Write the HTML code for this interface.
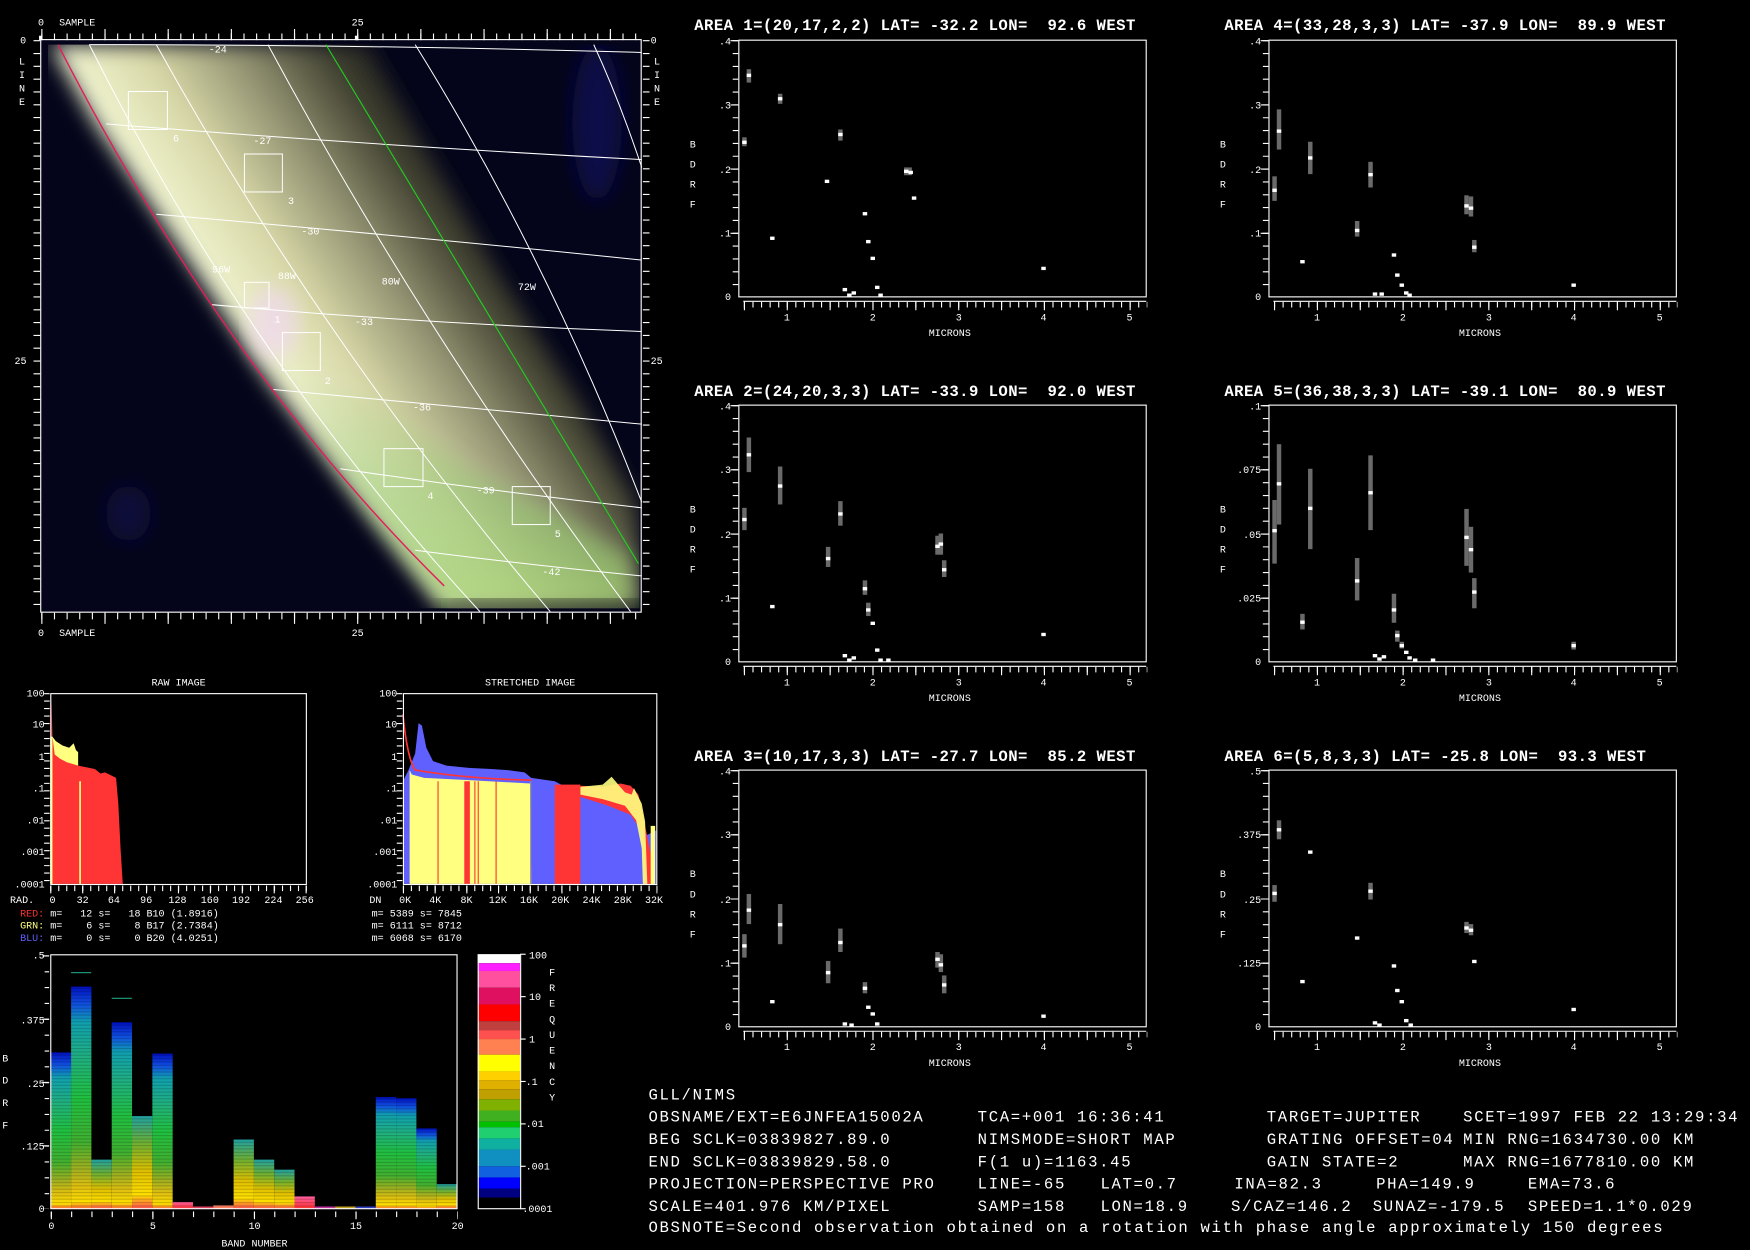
<!DOCTYPE html>
<html><head><meta charset="utf-8"><style>
html,body{margin:0;padding:0;background:#000;width:1750px;height:1250px;overflow:hidden}
svg{display:block}
text{font-family:"Liberation Mono","DejaVu Sans Mono",monospace;fill:#fff;white-space:pre}
.s{font-size:9px}
.t{font-size:14px;font-weight:bold;letter-spacing:0.4px}
.b{font-size:14px;letter-spacing:1.5px}
</style></head><body>
<svg width="1750" height="1250" viewBox="0 0 1568 1120" preserveAspectRatio="none" xmlns="http://www.w3.org/2000/svg" xml:space="preserve">
<defs>
<filter id="bl" x="-20%" y="-20%" width="140%" height="140%"><feGaussianBlur stdDeviation="9"/></filter>
<linearGradient id="band" gradientUnits="userSpaceOnUse" x1="140" y1="260" x2="440" y2="58">
<stop offset="0" stop-color="#90b8b0"/><stop offset="0.12" stop-color="#f0f4d0"/><stop offset="0.3" stop-color="#d8d8a8"/><stop offset="0.5" stop-color="#909070"/><stop offset="0.68" stop-color="#404030"/><stop offset="0.82" stop-color="#141418"/><stop offset="1" stop-color="#04051a"/>
</linearGradient>
<linearGradient id="grn" x1="0" y1="0" x2="0" y2="1">
<stop offset="0" stop-color="#90c070" stop-opacity="0"/><stop offset="0.5" stop-color="#90c870" stop-opacity="0.5"/><stop offset="1" stop-color="#a0d070" stop-opacity="0.75"/>
</linearGradient>
<linearGradient id="bg1" x1="0" y1="0" x2="0" y2="1">
<stop offset="0" stop-color="#0010c0"/><stop offset="0.08" stop-color="#1050e0"/><stop offset="0.16" stop-color="#10a0b0"/><stop offset="0.32" stop-color="#20b080"/><stop offset="0.5" stop-color="#20c040"/><stop offset="0.7" stop-color="#40b030"/><stop offset="0.82" stop-color="#a0b020"/><stop offset="0.9" stop-color="#e0c010"/><stop offset="0.97" stop-color="#ffe000"/><stop offset="1" stop-color="#ff6040"/>
</linearGradient>
<linearGradient id="bg2" x1="0" y1="0" x2="0" y2="1">
<stop offset="0" stop-color="#20a0a0"/><stop offset="0.3" stop-color="#70b030"/><stop offset="0.6" stop-color="#e0c000"/><stop offset="0.85" stop-color="#ffe000"/><stop offset="1" stop-color="#ff5050"/>
</linearGradient>
<linearGradient id="bg3" x1="0" y1="0" x2="0" y2="1">
<stop offset="0" stop-color="#ff60a0"/><stop offset="1" stop-color="#ff3030"/>
</linearGradient>
<pattern id="str" width="4" height="3" patternUnits="userSpaceOnUse"><rect width="4" height="1" fill="#000" opacity="0.18"/></pattern>
<clipPath id="cp"><rect x="43" y="40" width="530" height="505"/></clipPath>
<g id="ax">
<rect x="662" y="36" width="365" height="230" fill="none" stroke="#fff" stroke-width="1"/>
<line x1="659" y1="36" x2="659" y2="266" stroke="#fff" stroke-width="5" stroke-dasharray="1 10.5"/>
<line x1="658" y1="36" x2="658" y2="266" stroke="#fff" stroke-width="7" stroke-dasharray="1 56.5"/>
<line x1="666" y1="270" x2="1027" y2="270" stroke="#fff"/>
<line x1="666.5" y1="273" x2="1028" y2="273" stroke="#fff" stroke-width="5" stroke-dasharray="1 6.68"/>
<line x1="666.5" y1="274" x2="1028" y2="274" stroke="#fff" stroke-width="8" stroke-dasharray="1 37.4"/>
<text class="s" x="705" y="287" text-anchor="middle">1</text>
<text class="s" x="782" y="287" text-anchor="middle">2</text>
<text class="s" x="859" y="287" text-anchor="middle">3</text>
<text class="s" x="935" y="287" text-anchor="middle">4</text>
<text class="s" x="1012" y="287" text-anchor="middle">5</text>
<text class="s" x="851" y="301" text-anchor="middle">MICRONS</text>
<text class="s" x="618" y="132">B</text><text class="s" x="618" y="150">D</text><text class="s" x="618" y="168">R</text><text class="s" x="618" y="186">F</text>
</g>
</defs>

<!-- IMAGE PANEL -->
<rect x="37" y="36" width="538" height="512" fill="#04051a"/>
<g clip-path="url(#cp)">
<ellipse cx="535" cy="110" rx="22" ry="70" fill="#0c0c48" filter="url(#bl)"/>
<ellipse cx="115" cy="460" rx="20" ry="25" fill="#0c0c3a" filter="url(#bl)"/>
<polygon points="45,40 330,40 380,130 450,250 520,360 570,450 575,545 400,548 330,460 240,340 160,220 85,110" fill="url(#band)" filter="url(#bl)"/>
<polygon points="260,330 340,360 420,420 500,460 565,500 565,545 400,545 340,470 290,400" fill="url(#grn)" filter="url(#bl)"/>
<ellipse cx="245" cy="290" rx="22" ry="32" fill="#f0d8f0" opacity="0.75" filter="url(#bl)"/>
<polygon points="395,538 575,538 575,548 395,548" fill="#181e14" filter="url(#bl)"/>
</g>
<g fill="none" stroke="#fff" stroke-width="0.9">
<path d="M80 40 Q330 40 575 47"/>
<path d="M95 111 Q330 130 575 143"/>
<path d="M140 192 Q350 210 575 233"/>
<path d="M190 273 Q380 290 575 297"/>
<path d="M245 349 Q420 365 575 380"/>
<path d="M305 420 Q440 440 575 455"/>
<path d="M372 493 Q480 507 575 516"/>
<path d="M80 40 Q220 320 430 548"/>
<path d="M140 40 Q290 310 493 548"/>
<path d="M240 40 Q380 300 565 548"/>
<path d="M372 40 Q490 230 575 450"/>
<path d="M532 40 Q555 90 575 150"/>
<rect x="115" y="82" width="35" height="34"/>
<rect x="219" y="138" width="34" height="34"/>
<rect x="219" y="253" width="22" height="23"/>
<rect x="253" y="298" width="34" height="34"/>
<rect x="344" y="402" width="35" height="34"/>
<rect x="459" y="436" width="34" height="34"/>
</g>
<path d="M292 40 Q430 270 572 505" fill="none" stroke="#20d020" stroke-width="1"/>
<path d="M52 40 Q200 330 398 525" fill="none" stroke="#e0205a" stroke-width="1.3"/>
<g>
<text class="s" x="187" y="47">-24</text><text class="s" x="227" y="129">-27</text><text class="s" x="270" y="210">-30</text>
<text class="s" x="318" y="291">-33</text><text class="s" x="370" y="368">-36</text><text class="s" x="427" y="442">-39</text><text class="s" x="486" y="515">-42</text>
<text class="s" x="190" y="244">96W</text><text class="s" x="249" y="250">88W</text><text class="s" x="342" y="255">80W</text><text class="s" x="464" y="260">72W</text>
<text class="s" x="155" y="127">6</text><text class="s" x="258" y="183">3</text><text class="s" x="246" y="289">1</text><text class="s" x="291" y="344">2</text><text class="s" x="383" y="447">4</text><text class="s" x="497" y="481">5</text>
</g>
<rect x="36.5" y="35.5" width="538" height="513" fill="none" stroke="#fff"/>
<line x1="37" y1="33" x2="575" y2="33" stroke="#fff" stroke-width="6" stroke-dasharray="1 10.32"/>
<line x1="37" y1="31" x2="575" y2="31" stroke="#fff" stroke-width="10" stroke-dasharray="1 55.6"/>
<line x1="37" y1="552" x2="575" y2="552" stroke="#fff" stroke-width="6" stroke-dasharray="1 10.32"/>
<line x1="37" y1="554" x2="575" y2="554" stroke="#fff" stroke-width="10" stroke-dasharray="1 55.6"/>
<line x1="33" y1="36" x2="33" y2="548" stroke="#fff" stroke-width="6" stroke-dasharray="1 10.48"/>
<line x1="579" y1="36" x2="579" y2="548" stroke="#fff" stroke-width="6" stroke-dasharray="1 10.48"/>
<rect x="35" y="32" width="3" height="4" fill="#fff"/><rect x="318" y="32" width="3" height="4" fill="#fff"/>
<text class="s" x="34" y="23">0</text><text class="s" x="53" y="23">SAMPLE</text><text class="s" x="315" y="23">25</text>
<text class="s" x="34" y="570">0</text><text class="s" x="53" y="570">SAMPLE</text><text class="s" x="315" y="570">25</text>
<text class="s" x="18" y="39">0</text><text class="s" x="13" y="326">25</text><text class="s" x="583" y="39">0</text><text class="s" x="583" y="326">25</text>
<text class="s" x="17" y="58">L</text><text class="s" x="17" y="70">I</text><text class="s" x="17" y="82">N</text><text class="s" x="17" y="94">E</text>
<text class="s" x="586" y="58">L</text><text class="s" x="586" y="70">I</text><text class="s" x="586" y="82">N</text><text class="s" x="586" y="94">E</text>

<!-- RAW HISTOGRAM -->
<text class="s" x="160" y="614" text-anchor="middle">RAW IMAGE</text>
<polygon points="47,792 47,660 50,664 56,668 62,670 66,666 68,672 70,674 70,700 47,700" fill="#ffff80"/>
<polygon points="46,792 46,620 47,660 49,676 54,680 60,683 70,686 80,688 85,689 90,693 94,692 98,694 104,697 106,720 107,740 108,760 110,792" fill="#ff3535"/>
<rect x="45" y="660" width="2" height="132" fill="#ffff80"/>
<rect x="71" y="700" width="1.5" height="92" fill="#ffff80"/>
<rect x="45.5" y="621.5" width="229" height="171" fill="none" stroke="#fff"/>
<line x1="42" y1="621" x2="42" y2="792" stroke="#fff" stroke-width="5" stroke-dasharray="1 5.7"/>
<line x1="45" y1="796" x2="275" y2="796" stroke="#fff" stroke-width="5" stroke-dasharray="1 6.16"/>
<line x1="45" y1="797" x2="275" y2="797" stroke="#fff" stroke-width="7" stroke-dasharray="1 27.6"/>
<g text-anchor="end">
<text class="s" x="40" y="624">100</text><text class="s" x="40" y="652">10</text><text class="s" x="40" y="681">1</text><text class="s" x="40" y="709">.1</text><text class="s" x="40" y="738">.01</text><text class="s" x="40" y="766">.001</text><text class="s" x="40" y="795">.0001</text>
<text class="s" x="356" y="624">100</text><text class="s" x="356" y="652">10</text><text class="s" x="356" y="681">1</text><text class="s" x="356" y="709">.1</text><text class="s" x="356" y="738">.01</text><text class="s" x="356" y="766">.001</text><text class="s" x="356" y="795">.0001</text>
</g>
<text class="s" x="9" y="809">RAD.</text>
<g text-anchor="middle">
<text class="s" x="47" y="809">0</text><text class="s" x="74" y="809">32</text><text class="s" x="102" y="809">64</text><text class="s" x="131" y="809">96</text><text class="s" x="159" y="809">128</text><text class="s" x="188" y="809">160</text><text class="s" x="216" y="809">192</text><text class="s" x="245" y="809">224</text><text class="s" x="273" y="809">256</text>
</g>
<text class="s" x="18" y="821"><tspan style="fill:#ff3030">RED:</tspan> m=   12 s=   18 B10 (1.8916)</text>
<text class="s" x="18" y="832"><tspan style="fill:#ffff80">GRN:</tspan> m=    6 s=    8 B17 (2.7384)</text>
<text class="s" x="18" y="843"><tspan style="fill:#6060ff">BLU:</tspan> m=    0 s=    0 B20 (4.0251)</text>

<!-- STRETCHED HISTOGRAM -->
<text class="s" x="475" y="614" text-anchor="middle">STRETCHED IMAGE</text>
<polygon points="361,792 361,700 366,690 372,675 375,648 378,650 382,670 388,682 400,686 420,688 440,689 455,690 470,692 476,697 497,700 520,712 540,718 560,724 572,738 580,748 588,744 588,792" fill="#6060ff"/>
<polygon points="520,704 540,705 556,702 565,704 572,712 576,730 580,750 584,770 584,792 578,792 575,745 565,730 545,722 520,714" fill="#ff3535"/>
<rect x="497" y="703" width="23" height="89" fill="#ff3535"/>
<polygon points="367,792 367,690 369,694 380,697 420,699 475,702 476,792" fill="#ffff80"/>
<polygon points="520,705 540,703 548,696 554,703 560,710 566,712 568,706 575,720 578,736 580,792 576,792 575,760 570,735 560,722 540,716 520,712" fill="#ffff80" opacity="0.9"/>
<path d="M361 640 Q365 680 372 690 Q420 698 476 699" fill="none" stroke="#ff3535" stroke-width="1.5"/>
<rect x="392" y="700" width="1" height="92" fill="#ff3535"/><rect x="416" y="700" width="5" height="92" fill="#ff3535"/>
<rect x="425" y="700" width="1" height="92" fill="#ff3535"/><rect x="428" y="700" width="1" height="92" fill="#ff3535"/><rect x="444" y="700" width="1" height="92" fill="#ff3535"/>
<rect x="475" y="700" width="1" height="92" fill="#909090"/>
<rect x="583" y="740" width="4" height="52" fill="#ffff80"/>
<rect x="361.5" y="621.5" width="227" height="171" fill="none" stroke="#fff"/>
<line x1="358" y1="621" x2="358" y2="792" stroke="#fff" stroke-width="5" stroke-dasharray="1 5.7"/>
<line x1="361" y1="796" x2="589" y2="796" stroke="#fff" stroke-width="5" stroke-dasharray="1 6.1"/>
<line x1="361" y1="797" x2="589" y2="797" stroke="#fff" stroke-width="7" stroke-dasharray="1 27.4"/>
<text class="s" x="331" y="809">DN</text>
<g text-anchor="middle">
<text class="s" x="363" y="809">0K</text><text class="s" x="390" y="809">4K</text><text class="s" x="418" y="809">8K</text><text class="s" x="446" y="809">12K</text><text class="s" x="474" y="809">16K</text><text class="s" x="502" y="809">20K</text><text class="s" x="530" y="809">24K</text><text class="s" x="558" y="809">28K</text><text class="s" x="586" y="809">32K</text>
</g>
<text class="s" x="333" y="821">m= 5389 s= 7845</text>
<text class="s" x="333" y="832">m= 6111 s= 8712</text>
<text class="s" x="333" y="843">m= 6068 s= 6170</text>

<!-- BAND CHART -->
<g>
<rect x="45.5" y="943" width="18.2" height="140" fill="url(#bg1)"/>
<rect x="63.7" y="884" width="18.2" height="199" fill="url(#bg1)"/>
<rect x="81.9" y="1039" width="18.2" height="44" fill="url(#bg2)"/>
<rect x="100.1" y="916" width="18.2" height="167" fill="url(#bg1)"/>
<rect x="118.3" y="1000" width="18.2" height="83" fill="url(#bg2)"/>
<rect x="136.5" y="944" width="18.2" height="139" fill="url(#bg1)"/>
<rect x="154.7" y="1077" width="18.2" height="6" fill="url(#bg3)"/>
<rect x="172.9" y="1081" width="18.2" height="2" fill="#e04060"/>
<rect x="191.1" y="1080" width="18.2" height="3" fill="#ff8060"/>
<rect x="209.3" y="1021" width="18.2" height="62" fill="url(#bg2)"/>
<rect x="227.5" y="1039" width="18.2" height="44" fill="url(#bg2)"/>
<rect x="245.7" y="1048" width="18.2" height="35" fill="url(#bg2)"/>
<rect x="263.9" y="1072" width="18.2" height="11" fill="url(#bg3)"/>
<rect x="282.1" y="1081" width="18.2" height="2" fill="#c030a0"/>
<rect x="300.3" y="1081" width="18.2" height="2" fill="#c0a020"/>
<rect x="318.5" y="1081" width="18.2" height="2" fill="#3040c0"/>
<rect x="336.7" y="983" width="18.2" height="100" fill="url(#bg1)"/>
<rect x="354.9" y="984" width="18.2" height="99" fill="url(#bg1)"/>
<rect x="373.1" y="1011" width="18.2" height="72" fill="url(#bg1)"/>
<rect x="391.3" y="1061" width="18.2" height="22" fill="url(#bg2)"/>
<rect x="45" y="880" width="364" height="203" fill="url(#str)"/>
<rect x="63.7" y="871" width="18" height="1" fill="#20a080"/><rect x="100.1" y="894" width="18" height="1" fill="#20a080"/>
</g>
<rect x="45.5" y="855.5" width="364" height="227.5" fill="none" stroke="#fff"/>
<line x1="42" y1="856" x2="42" y2="1083" stroke="#fff" stroke-width="4" stroke-dasharray="1 13.2"/>
<line x1="41" y1="856" x2="41" y2="1083" stroke="#fff" stroke-width="6" stroke-dasharray="1 55.7"/>
<line x1="45.5" y1="1088" x2="410" y2="1088" stroke="#fff" stroke-width="5" stroke-dasharray="1 17.2"/>
<line x1="45.5" y1="1089" x2="410" y2="1089" stroke="#fff" stroke-width="7" stroke-dasharray="1 90"/>
<g text-anchor="end">
<text class="s" x="40" y="859">.5</text><text class="s" x="40" y="917">.375</text><text class="s" x="40" y="974">.25</text><text class="s" x="40" y="1030">.125</text><text class="s" x="40" y="1086">0</text>
</g>
<text class="s" x="2" y="951">B</text><text class="s" x="2" y="971">D</text><text class="s" x="2" y="991">R</text><text class="s" x="2" y="1011">F</text>
<g text-anchor="middle">
<text class="s" x="46" y="1101">0</text><text class="s" x="137" y="1101">5</text><text class="s" x="228" y="1101">10</text><text class="s" x="319" y="1101">15</text><text class="s" x="410" y="1101">20</text>
<text class="s" x="228" y="1117">BAND NUMBER</text>
</g>
<!-- colorbar -->
<g>
<rect x="428" y="855" width="38" height="8" fill="#fff"/>
<rect x="428" y="863" width="38" height="7" fill="#ff20ff"/>
<rect x="428" y="870" width="38" height="15" fill="#ff50a0"/>
<rect x="428" y="885" width="38" height="15" fill="#e01060"/>
<rect x="428" y="900" width="38" height="15" fill="#ff0000"/>
<rect x="428" y="915" width="38" height="8" fill="#c04040"/>
<rect x="428" y="923" width="38" height="8" fill="#ff5050"/>
<rect x="428" y="931" width="38" height="14" fill="#ff8050"/>
<rect x="428" y="945" width="38" height="15" fill="#ffff00"/>
<rect x="428" y="960" width="38" height="8" fill="#ffd000"/>
<rect x="428" y="968" width="38" height="8" fill="#e0b000"/>
<rect x="428" y="976" width="38" height="9" fill="#c0a000"/>
<rect x="428" y="985" width="38" height="10" fill="#80b000"/>
<rect x="428" y="995" width="38" height="10" fill="#40b020"/>
<rect x="428" y="1005" width="38" height="5" fill="#00c000"/>
<rect x="428" y="1010" width="38" height="10" fill="#20d070"/>
<rect x="428" y="1020" width="38" height="10" fill="#10b0a0"/>
<rect x="428" y="1030" width="38" height="15" fill="#1090c0"/>
<rect x="428" y="1045" width="38" height="10" fill="#1060e0"/>
<rect x="428" y="1055" width="38" height="10" fill="#0000ff"/>
<rect x="428" y="1065" width="38" height="8" fill="#000080"/>
<rect x="428.5" y="855.5" width="38" height="227.5" fill="none" stroke="#fff"/>
</g>
<g stroke="#fff"><line x1="466" y1="855" x2="471" y2="855"/><line x1="466" y1="893" x2="471" y2="893"/><line x1="466" y1="931" x2="471" y2="931"/><line x1="466" y1="969" x2="471" y2="969"/><line x1="466" y1="1007" x2="471" y2="1007"/><line x1="466" y1="1045" x2="471" y2="1045"/><line x1="466" y1="1083" x2="471" y2="1083"/></g>
<text class="s" x="474" y="859">100</text><text class="s" x="474" y="896">10</text><text class="s" x="474" y="934">1</text><text class="s" x="471" y="972">.1</text><text class="s" x="471" y="1010">.01</text><text class="s" x="471" y="1048">.001</text><text class="s" x="468" y="1086">.0001</text>
<g><text class="s" x="492" y="874">F</text><text class="s" x="492" y="888">R</text><text class="s" x="492" y="902">E</text><text class="s" x="492" y="916">Q</text><text class="s" x="492" y="930">U</text><text class="s" x="492" y="944">E</text><text class="s" x="492" y="958">N</text><text class="s" x="492" y="972">C</text><text class="s" x="492" y="986">Y</text></g>

<!-- SPECTRUM PLOTS -->
<use href="#ax"/>
<use href="#ax" transform="translate(0,327)"/>
<use href="#ax" transform="translate(0,654)"/>
<use href="#ax" transform="translate(475,0)"/>
<use href="#ax" transform="translate(475,327)"/>
<use href="#ax" transform="translate(475,654)"/>

<text class="t" x="622" y="27">AREA 1=(20,17,2,2) LAT= -32.2 LON=  92.6 WEST</text>
<text class="t" x="622" y="355">AREA 2=(24,20,3,3) LAT= -33.9 LON=  92.0 WEST</text>
<text class="t" x="622" y="682">AREA 3=(10,17,3,3) LAT= -27.7 LON=  85.2 WEST</text>
<text class="t" x="1097" y="27">AREA 4=(33,28,3,3) LAT= -37.9 LON=  89.9 WEST</text>
<text class="t" x="1097" y="355">AREA 5=(36,38,3,3) LAT= -39.1 LON=  80.9 WEST</text>
<text class="t" x="1097" y="682">AREA 6=(5,8,3,3) LAT= -25.8 LON=  93.3 WEST</text>

<g text-anchor="end">
<text class="s" x="655" y="40">.4</text><text class="s" x="655" y="97">.3</text><text class="s" x="655" y="155">.2</text><text class="s" x="655" y="212">.1</text><text class="s" x="655" y="269">0</text>
<text class="s" x="655" y="367">.4</text><text class="s" x="655" y="424">.3</text><text class="s" x="655" y="482">.2</text><text class="s" x="655" y="539">.1</text><text class="s" x="655" y="596">0</text>
<text class="s" x="655" y="694">.4</text><text class="s" x="655" y="751">.3</text><text class="s" x="655" y="809">.2</text><text class="s" x="655" y="866">.1</text><text class="s" x="655" y="923">0</text>
<text class="s" x="1130" y="40">.4</text><text class="s" x="1130" y="97">.3</text><text class="s" x="1130" y="155">.2</text><text class="s" x="1130" y="212">.1</text><text class="s" x="1130" y="269">0</text>
<text class="s" x="1130" y="367">.1</text><text class="s" x="1130" y="424">.075</text><text class="s" x="1130" y="482">.05</text><text class="s" x="1130" y="539">.025</text><text class="s" x="1130" y="596">0</text>
<text class="s" x="1130" y="694">.5</text><text class="s" x="1130" y="751">.375</text><text class="s" x="1130" y="809">.25</text><text class="s" x="1130" y="866">.125</text><text class="s" x="1130" y="923">0</text>
</g>

<!-- gray error bars -->
<g fill="#6a6a6a">
<rect x="669" y="62" width="4" height="12"/><rect x="697" y="84" width="4" height="9"/><rect x="665" y="123" width="4" height="8"/><rect x="751" y="116" width="4" height="10"/><rect x="810" y="150" width="7" height="7"/>
<rect x="665" y="455" width="4" height="20"/><rect x="669" y="392" width="4" height="31"/><rect x="697" y="418" width="4" height="34"/><rect x="740" y="490" width="4" height="18"/><rect x="751" y="449" width="4" height="22"/><rect x="773" y="520" width="4" height="13"/><rect x="776" y="540" width="4" height="12"/><rect x="838" y="480" width="4" height="17"/><rect x="841" y="478" width="4" height="19"/><rect x="844" y="502" width="4" height="15"/>
<rect x="665" y="837" width="4" height="21"/><rect x="669" y="801" width="4" height="27"/><rect x="697" y="810" width="4" height="36"/><rect x="740" y="861" width="4" height="20"/><rect x="751" y="832" width="4" height="21"/><rect x="773" y="880" width="4" height="10"/><rect x="838" y="853" width="4" height="14"/><rect x="841" y="855" width="4" height="16"/><rect x="844" y="874" width="4" height="16"/>
<rect x="1140" y="158" width="4" height="22"/><rect x="1144" y="98" width="4" height="36"/><rect x="1172" y="127" width="4" height="29"/><rect x="1214" y="198" width="4" height="14"/><rect x="1226" y="145" width="4" height="23"/><rect x="1312" y="175" width="4" height="17"/><rect x="1316" y="176" width="4" height="18"/><rect x="1319" y="215" width="4" height="11"/>
<rect x="1140" y="448" width="4" height="57"/><rect x="1144" y="398" width="4" height="72"/><rect x="1165" y="550" width="4" height="14"/><rect x="1172" y="420" width="4" height="72"/><rect x="1214" y="500" width="4" height="38"/><rect x="1226" y="408" width="4" height="67"/><rect x="1247" y="532" width="4" height="26"/><rect x="1250" y="565" width="4" height="10"/><rect x="1254" y="575" width="4" height="6"/><rect x="1312" y="456" width="4" height="51"/><rect x="1316" y="472" width="4" height="41"/><rect x="1319" y="518" width="4" height="27"/><rect x="1408" y="575" width="4" height="7"/>
<rect x="1140" y="793" width="4" height="15"/><rect x="1144" y="735" width="4" height="17"/><rect x="1226" y="791" width="4" height="15"/><rect x="1312" y="826" width="4" height="10"/><rect x="1316" y="828" width="4" height="10"/>
</g>
<g fill="#fff">
<rect x="665" y="126" width="4" height="3"/><rect x="669" y="66" width="4" height="3"/><rect x="690" y="212" width="4" height="3"/><rect x="697" y="87" width="4" height="3"/><rect x="739" y="161" width="4" height="3"/><rect x="751" y="119" width="4" height="3"/><rect x="773" y="190" width="4" height="3"/><rect x="776" y="215" width="4" height="3"/><rect x="780" y="230" width="4" height="3"/><rect x="755" y="258" width="4" height="3"/><rect x="759" y="263" width="4" height="3"/><rect x="763" y="261" width="4" height="3"/><rect x="784" y="256" width="4" height="3"/><rect x="787" y="263" width="4" height="3"/><rect x="810" y="152" width="4" height="3"/><rect x="814" y="153" width="4" height="3"/><rect x="817" y="176" width="4" height="3"/><rect x="933" y="239" width="4" height="3"/>
<rect x="665" y="464" width="4" height="3"/><rect x="669" y="406" width="4" height="3"/><rect x="690" y="542" width="4" height="3"/><rect x="697" y="434" width="4" height="3"/><rect x="740" y="499" width="4" height="3"/><rect x="751" y="459" width="4" height="3"/><rect x="773" y="526" width="4" height="3"/><rect x="776" y="545" width="4" height="3"/><rect x="780" y="557" width="4" height="3"/><rect x="755" y="586" width="4" height="3"/><rect x="759" y="590" width="4" height="3"/><rect x="763" y="588" width="4" height="3"/><rect x="784" y="581" width="4" height="3"/><rect x="787" y="590" width="4" height="3"/><rect x="794" y="590" width="4" height="3"/><rect x="838" y="488" width="4" height="3"/><rect x="841" y="486" width="4" height="3"/><rect x="844" y="509" width="4" height="3"/><rect x="933" y="567" width="4" height="3"/>
<rect x="665" y="846" width="4" height="3"/><rect x="669" y="814" width="4" height="3"/><rect x="690" y="896" width="4" height="3"/><rect x="697" y="827" width="4" height="3"/><rect x="740" y="870" width="4" height="3"/><rect x="751" y="843" width="4" height="3"/><rect x="773" y="884" width="4" height="3"/><rect x="776" y="901" width="4" height="3"/><rect x="780" y="907" width="4" height="3"/><rect x="755" y="916" width="4" height="3"/><rect x="761" y="917" width="4" height="3"/><rect x="784" y="916" width="4" height="3"/><rect x="838" y="858" width="4" height="3"/><rect x="841" y="863" width="4" height="3"/><rect x="844" y="881" width="4" height="3"/><rect x="933" y="909" width="4" height="3"/>
<rect x="1140" y="169" width="4" height="3"/><rect x="1144" y="116" width="4" height="3"/><rect x="1165" y="233" width="4" height="3"/><rect x="1172" y="140" width="4" height="3"/><rect x="1214" y="205" width="4" height="3"/><rect x="1226" y="155" width="4" height="3"/><rect x="1247" y="227" width="4" height="3"/><rect x="1250" y="245" width="4" height="3"/><rect x="1254" y="254" width="4" height="3"/><rect x="1230" y="262" width="4" height="3"/><rect x="1236" y="262" width="4" height="3"/><rect x="1258" y="261" width="4" height="3"/><rect x="1261" y="263" width="4" height="3"/><rect x="1312" y="183" width="4" height="3"/><rect x="1316" y="185" width="4" height="3"/><rect x="1319" y="220" width="4" height="3"/><rect x="1408" y="254" width="4" height="3"/>
<rect x="1140" y="474" width="4" height="3"/><rect x="1144" y="432" width="4" height="3"/><rect x="1165" y="556" width="4" height="3"/><rect x="1172" y="454" width="4" height="3"/><rect x="1214" y="519" width="4" height="3"/><rect x="1226" y="440" width="4" height="3"/><rect x="1247" y="545" width="4" height="3"/><rect x="1250" y="568" width="4" height="3"/><rect x="1254" y="577" width="4" height="3"/><rect x="1230" y="586" width="4" height="3"/><rect x="1234" y="589" width="4" height="3"/><rect x="1238" y="587" width="4" height="3"/><rect x="1258" y="583" width="4" height="3"/><rect x="1261" y="588" width="4" height="3"/><rect x="1266" y="590" width="4" height="3"/><rect x="1282" y="590" width="4" height="3"/><rect x="1312" y="480" width="4" height="3"/><rect x="1316" y="491" width="4" height="3"/><rect x="1319" y="529" width="4" height="3"/><rect x="1408" y="577" width="4" height="3"/>
<rect x="1140" y="799" width="4" height="3"/><rect x="1144" y="742" width="4" height="3"/><rect x="1165" y="878" width="4" height="3"/><rect x="1172" y="762" width="4" height="3"/><rect x="1214" y="839" width="4" height="3"/><rect x="1226" y="797" width="4" height="3"/><rect x="1247" y="864" width="4" height="3"/><rect x="1250" y="886" width="4" height="3"/><rect x="1254" y="896" width="4" height="3"/><rect x="1230" y="915" width="4" height="3"/><rect x="1234" y="917" width="4" height="3"/><rect x="1258" y="913" width="4" height="3"/><rect x="1262" y="917" width="4" height="3"/><rect x="1312" y="830" width="4" height="3"/><rect x="1316" y="832" width="4" height="3"/><rect x="1319" y="860" width="4" height="3"/><rect x="1408" y="903" width="4" height="3"/>
</g>

<!-- BOTTOM TEXT -->
<g>
<text class="b" x="581" y="985">GLL/NIMS</text>
<text class="b" x="581" y="1005">OBSNAME/EXT=E6JNFEA15002A</text>
<text class="b" x="876" y="1005">TCA=+001 16:36:41</text>
<text class="b" x="1135" y="1005">TARGET=JUPITER</text>
<text class="b" x="1311" y="1005">SCET=1997 FEB 22 13:29:34</text>
<text class="b" x="581" y="1025">BEG SCLK=03839827.89.0</text>
<text class="b" x="876" y="1025">NIMSMODE=SHORT MAP</text>
<text class="b" x="1135" y="1025">GRATING OFFSET=04</text>
<text class="b" x="1311" y="1025">MIN RNG=1634730.00 KM</text>
<text class="b" x="581" y="1045">END SCLK=03839829.58.0</text>
<text class="b" x="876" y="1045">F(1 u)=1163.45</text>
<text class="b" x="1135" y="1045">GAIN STATE=2</text>
<text class="b" x="1311" y="1045">MAX RNG=1677810.00 KM</text>
<text class="b" x="581" y="1065">PROJECTION=PERSPECTIVE PRO</text>
<text class="b" x="876" y="1065">LINE=-65</text>
<text class="b" x="986" y="1065">LAT=0.7</text>
<text class="b" x="1106" y="1065">INA=82.3</text>
<text class="b" x="1233" y="1065">PHA=149.9</text>
<text class="b" x="1369" y="1065">EMA=73.6</text>
<text class="b" x="581" y="1085">SCALE=401.976 KM/PIXEL</text>
<text class="b" x="876" y="1085">SAMP=158</text>
<text class="b" x="986" y="1085">LON=18.9</text>
<text class="b" x="1103" y="1085">S/CAZ=146.2</text>
<text class="b" x="1230" y="1085">SUNAZ=-179.5</text>
<text class="b" x="1369" y="1085">SPEED=1.1*0.029</text>
<text class="b" x="581" y="1104">OBSNOTE=Second observation obtained on a rotation with phase angle approximately 150 degrees</text>
</g>
</svg>
</body></html>
